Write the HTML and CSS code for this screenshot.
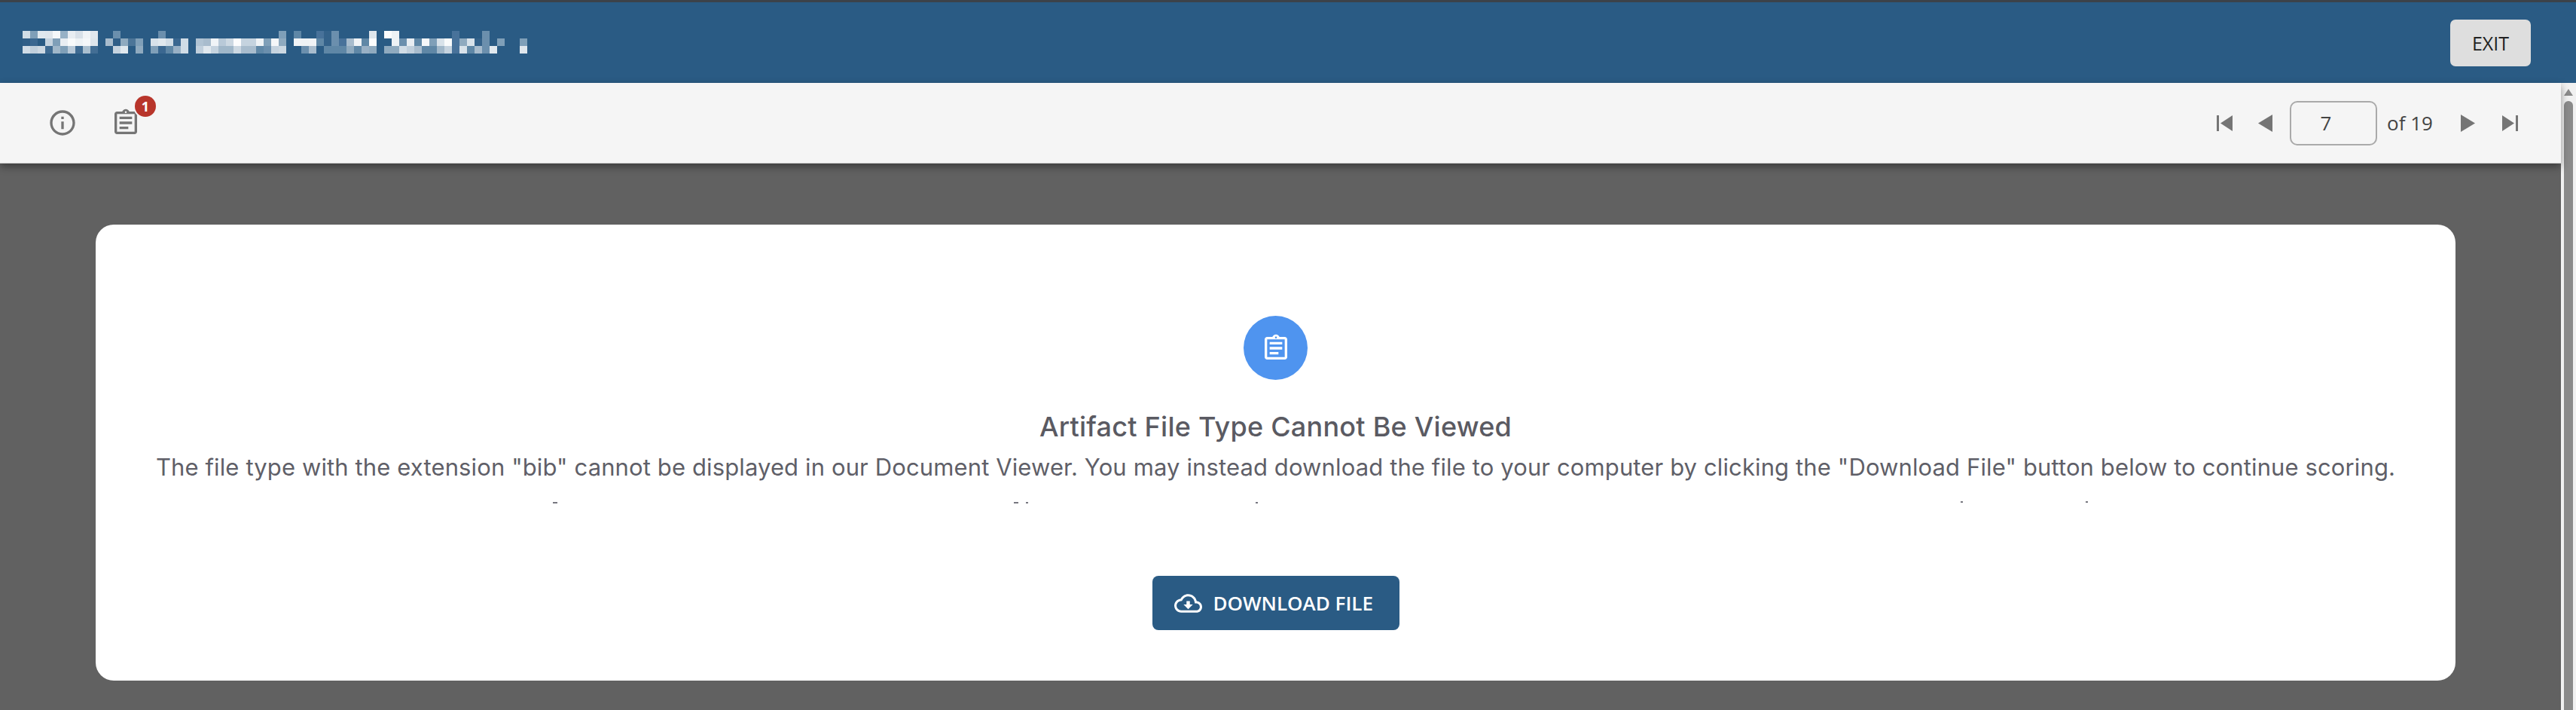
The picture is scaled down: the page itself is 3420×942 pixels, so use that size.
FILE: index.html
```html
<!DOCTYPE html>
<html lang="en">
<head>
    <meta charset="UTF-8">
    <meta name="viewport" content="width=device-width, initial-scale=1.0">
    <title>Document Viewer</title>
    <link rel="stylesheet" href="styles.css">
</head>
<body>
    <header class="topbar">
        <!-- title is pixelated in the source, so it is drawn as its mosaic -->
        <svg class="mosaic" viewBox="0 0 67 3" shape-rendering="crispEdges" role="img" aria-label="Pixelated document title">
            <g>
                <rect x="0" y="0" width="1" height="1" fill="#d0dde6"/><rect x="1" y="0" width="1" height="1" fill="#7f9fb8"/><rect x="2" y="0" width="1" height="1" fill="#e0e8ee"/><rect x="3" y="0" width="1" height="1" fill="#dfe6ec"/><rect x="4" y="0" width="1" height="1" fill="#f5f8fa"/><rect x="5" y="0" width="1" height="1" fill="#97b1c6"/><rect x="6" y="0" width="1" height="1" fill="#e8edf2"/><rect x="7" y="0" width="1" height="1" fill="#d8e0e8"/><rect x="8" y="0" width="1" height="1" fill="#f0f3f6"/><rect x="9" y="0" width="1" height="1" fill="#e2e8ee"/>
                <rect x="12" y="0" width="1" height="1" fill="#6b8fad"/><rect x="18" y="0" width="1" height="1" fill="#6b8fad"/>
                <rect x="34" y="0" width="1" height="1" fill="#7f9fb8"/><rect x="36" y="0" width="1" height="1" fill="#5f87a6"/><rect x="39" y="0" width="1" height="1" fill="#48729a"/><rect x="40" y="0" width="1" height="1" fill="#34628a"/><rect x="41" y="0" width="1" height="1" fill="#6b8fad"/><rect x="46" y="0" width="1" height="1" fill="#dfe6ec"/><rect x="48" y="0" width="1" height="1" fill="#fbfcfd"/><rect x="49" y="0" width="1" height="1" fill="#eef2f5"/><rect x="57" y="0" width="1" height="1" fill="#48729a"/><rect x="61" y="0" width="1" height="1" fill="#6b8fad"/>
            </g>
            <g>
                <rect x="0" y="1" width="1" height="1" fill="#2f5e87"/><rect x="1" y="1" width="1" height="1" fill="#3a6790"/><rect x="3" y="1" width="1" height="1" fill="#c5d3df"/><rect x="4" y="1" width="1" height="1" fill="#7f9fb8"/><rect x="5" y="1" width="1" height="1" fill="#e8edf2"/><rect x="6" y="1" width="1" height="1" fill="#f8fafb"/><rect x="7" y="1" width="1" height="1" fill="#eef2f5"/><rect x="8" y="1" width="1" height="1" fill="#f5f7f9"/><rect x="9" y="1" width="1" height="1" fill="#dfe6ec"/>
                <rect x="11" y="1" width="1" height="1" fill="#a8bccd"/><rect x="12" y="1" width="1" height="1" fill="#2f5e87"/><rect x="13" y="1" width="1" height="1" fill="#8faabf"/><rect x="14" y="1" width="1" height="1" fill="#4c7598"/><rect x="15" y="1" width="1" height="1" fill="#7f9fb8"/>
                <rect x="17" y="1" width="1" height="1" fill="#d8e2ea"/><rect x="18" y="1" width="1" height="1" fill="#e0e8ee"/><rect x="19" y="1" width="1" height="1" fill="#d0dce6"/><rect x="20" y="1" width="1" height="1" fill="#3a6790"/><rect x="21" y="1" width="1" height="1" fill="#d0dce6"/>
                <rect x="23" y="1" width="1" height="1" fill="#b0c3d3"/><rect x="24" y="1" width="1" height="1" fill="#a8bccd"/><rect x="25" y="1" width="1" height="1" fill="#f0f4f7"/><rect x="26" y="1" width="1" height="1" fill="#b8c9d8"/><rect x="27" y="1" width="1" height="1" fill="#ccd8e2"/><rect x="28" y="1" width="1" height="1" fill="#fbfcfd"/><rect x="29" y="1" width="1" height="1" fill="#c5d3df"/><rect x="30" y="1" width="1" height="1" fill="#c5d3df"/><rect x="31" y="1" width="1" height="1" fill="#eef2f5"/><rect x="32" y="1" width="1" height="1" fill="#7f9fb8"/><rect x="33" y="1" width="1" height="1" fill="#f5f7f9"/><rect x="34" y="1" width="1" height="1" fill="#8faabf"/>
                <rect x="36" y="1" width="1" height="1" fill="#f0f3f6"/><rect x="37" y="1" width="1" height="1" fill="#eef2f5"/><rect x="38" y="1" width="1" height="1" fill="#f0f3f6"/><rect x="39" y="1" width="1" height="1" fill="#5f87a6"/><rect x="40" y="1" width="1" height="1" fill="#34628a"/><rect x="41" y="1" width="1" height="1" fill="#6b8fad"/><rect x="42" y="1" width="1" height="1" fill="#48729a"/><rect x="43" y="1" width="1" height="1" fill="#a8bccd"/><rect x="44" y="1" width="1" height="1" fill="#f0f3f6"/><rect x="45" y="1" width="1" height="1" fill="#5f87a6"/><rect x="46" y="1" width="1" height="1" fill="#fbfcfd"/>
                <rect x="49" y="1" width="1" height="1" fill="#eef2f5"/><rect x="50" y="1" width="1" height="1" fill="#6b8fad"/><rect x="51" y="1" width="1" height="1" fill="#e8edf2"/><rect x="52" y="1" width="1" height="1" fill="#5f87a6"/><rect x="53" y="1" width="1" height="1" fill="#f5f7f9"/><rect x="54" y="1" width="1" height="1" fill="#7f9fb8"/><rect x="55" y="1" width="1" height="1" fill="#d8e2ea"/><rect x="56" y="1" width="1" height="1" fill="#f8fafb"/><rect x="57" y="1" width="1" height="1" fill="#48729a"/><rect x="58" y="1" width="1" height="1" fill="#8faabf"/><rect x="59" y="1" width="1" height="1" fill="#d8e2ea"/><rect x="60" y="1" width="1" height="1" fill="#34628a"/><rect x="61" y="1" width="1" height="1" fill="#6b8fad"/><rect x="63" y="1" width="1" height="1" fill="#7f9fb8"/><rect x="66" y="1" width="1" height="1" fill="#7f9fb8"/>
            </g>
            <g>
                <rect x="0" y="2" width="1" height="1" fill="#d0dce6"/><rect x="1" y="2" width="1" height="1" fill="#c0cfdc"/><rect x="2" y="2" width="1" height="1" fill="#ccd8e2"/><rect x="3" y="2" width="1" height="1" fill="#3f6b92"/><rect x="4" y="2" width="1" height="1" fill="#a0b7c9"/><rect x="5" y="2" width="1" height="1" fill="#7f9fb8"/><rect x="6" y="2" width="1" height="1" fill="#b8c9d8"/><rect x="7" y="2" width="1" height="1" fill="#3f6b92"/><rect x="8" y="2" width="1" height="1" fill="#aabfcf"/><rect x="9" y="2" width="1" height="1" fill="#436e94"/>
                <rect x="12" y="2" width="1" height="1" fill="#c5d3df"/><rect x="13" y="2" width="1" height="1" fill="#e0e8ee"/><rect x="15" y="2" width="1" height="1" fill="#8faabf"/>
                <rect x="17" y="2" width="1" height="1" fill="#7f9fb8"/><rect x="18" y="2" width="1" height="1" fill="#3a6790"/><rect x="19" y="2" width="1" height="1" fill="#5f87a6"/><rect x="20" y="2" width="1" height="1" fill="#98b0c5"/><rect x="21" y="2" width="1" height="1" fill="#d0dce6"/>
                <rect x="23" y="2" width="1" height="1" fill="#c0cfdc"/><rect x="24" y="2" width="1" height="1" fill="#e0e8ee"/><rect x="25" y="2" width="1" height="1" fill="#c5d3df"/><rect x="26" y="2" width="1" height="1" fill="#a0b7c9"/><rect x="27" y="2" width="1" height="1" fill="#a0b7c9"/><rect x="28" y="2" width="1" height="1" fill="#ccd8e2"/><rect x="29" y="2" width="1" height="1" fill="#a8bccd"/><rect x="30" y="2" width="1" height="1" fill="#a8bccd"/><rect x="31" y="2" width="1" height="1" fill="#5f87a6"/><rect x="32" y="2" width="1" height="1" fill="#6b8fad"/><rect x="33" y="2" width="1" height="1" fill="#c5d3df"/><rect x="34" y="2" width="1" height="1" fill="#ccd8e2"/>
                <rect x="37" y="2" width="1" height="1" fill="#6b8fad"/><rect x="38" y="2" width="1" height="1" fill="#a8bccd"/><rect x="40" y="2" width="1" height="1" fill="#5f87a6"/><rect x="41" y="2" width="1" height="1" fill="#5f87a6"/><rect x="42" y="2" width="1" height="1" fill="#5f87a6"/><rect x="43" y="2" width="1" height="1" fill="#8faabf"/><rect x="44" y="2" width="1" height="1" fill="#5f87a6"/><rect x="45" y="2" width="1" height="1" fill="#98b0c5"/><rect x="46" y="2" width="1" height="1" fill="#8faabf"/>
                <rect x="48" y="2" width="1" height="1" fill="#8faabf"/><rect x="49" y="2" width="1" height="1" fill="#8faabf"/><rect x="50" y="2" width="1" height="1" fill="#d0dce6"/><rect x="51" y="2" width="1" height="1" fill="#c0cfdc"/><rect x="52" y="2" width="1" height="1" fill="#a8bccd"/><rect x="53" y="2" width="1" height="1" fill="#5f87a6"/><rect x="54" y="2" width="1" height="1" fill="#5f87a6"/><rect x="55" y="2" width="1" height="1" fill="#a0b7c9"/><rect x="56" y="2" width="1" height="1" fill="#c5d3df"/><rect x="57" y="2" width="1" height="1" fill="#48729a"/><rect x="58" y="2" width="1" height="1" fill="#d8e2ea"/><rect x="59" y="2" width="1" height="1" fill="#5f87a6"/><rect x="60" y="2" width="1" height="1" fill="#a8bccd"/><rect x="61" y="2" width="1" height="1" fill="#6b8fad"/><rect x="62" y="2" width="1" height="1" fill="#e0e8ee"/><rect x="66" y="2" width="1" height="1" fill="#dfe6ec"/>
            </g>
        </svg>
        <button class="exit-btn">EXIT</button>
    </header>

    <div class="viewer">
        <div class="pane">
            <div class="toolbar">
                <div class="tools">
                    <svg class="tool-icon" viewBox="0 0 24 24"><path d="M11 7h2v2h-2zm0 4h2v6h-2zm1-9C6.48 2 2 6.48 2 12s4.48 10 10 10 10-4.48 10-10S17.52 2 12 2zm0 18c-4.41 0-8-3.59-8-8s3.59-8 8-8 8 3.59 8 8-3.59 8-8 8z"/></svg>
                    <div class="tool-badged">
                        <svg class="tool-icon" viewBox="0 0 24 24"><path d="M7 15h7v2H7zm0-4h10v2H7zm0-4h10v2H7zm12-4h-4.18C14.4 1.84 13.3 1 12 1s-2.4.84-2.82 2H5c-1.1 0-2 .9-2 2v14c0 1.1.9 2 2 2h14c1.1 0 2-.9 2-2V5c0-1.1-.9-2-2-2zm-7-.25c.41 0 .75.34.75.75s-.34.75-.75.75-.75-.34-.75-.75.34-.75.75-.75zM19 19H5V5h14v14z"/></svg>
                        <span class="badge">1</span>
                    </div>
                </div>
                <div class="pager">
                    <svg class="pager-end" viewBox="0 0 21 21"><path d="M0 0h3v21H0zM21 0v21L5 10.5z"/></svg>
                    <svg class="pager-step pager-prev" viewBox="0 0 19 23"><path d="M19 0v23L0 11.5z"/></svg>
                    <input class="page-input" type="text" value="7">
                    <span class="page-total">of 19</span>
                    <svg class="pager-step pager-next" viewBox="0 0 19 23"><path d="M0 0v23l19-11.5z"/></svg>
                    <svg class="pager-end pager-last" viewBox="0 0 21 21"><path d="M18 0h3v21h-3zM0 0v21l16-10.5z"/></svg>
                </div>
            </div>

            <main class="stage">
                <section class="card">
                    <div class="card-icon">
                        <svg viewBox="0 0 24 24"><path d="M7 15h7v2H7zm0-4h10v2H7zm0-4h10v2H7zm12-4h-4.18C14.4 1.84 13.3 1 12 1s-2.4.84-2.82 2H5c-1.1 0-2 .9-2 2v14c0 1.1.9 2 2 2h14c1.1 0 2-.9 2-2V5c0-1.1-.9-2-2-2zm-7-.25c.41 0 .75.34.75.75s-.34.75-.75.75-.75-.34-.75-.75.34-.75.75-.75zM19 19H5V5h14v14z"/></svg>
                    </div>
                    <h2 class="card-title">Artifact File Type Cannot Be Viewed</h2>
                    <p class="card-text">The file type with the extension "bib" cannot be displayed in our Document Viewer. You may instead download the file to your computer by clicking the "Download File" button below to continue scoring.</p>
                    <!-- tops of a second line that is cut off in the source -->
                    <svg class="cut-line" viewBox="0 0 2975 4" aria-hidden="true">
                        <rect x="528" y="1" width="6" height="2"/><rect x="1140" y="1" width="6" height="2"/><rect x="1156" y="1" width="3" height="2"/><rect x="1461" y="1" width="3" height="2"/><rect x="2397" y="0" width="3" height="2"/><rect x="2563" y="0" width="3" height="2"/>
                    </svg>
                    <button class="download-btn">
                        <svg viewBox="0 0 24 24"><path d="M19.35 10.04C18.67 6.59 15.64 4 12 4 9.11 4 6.6 5.64 5.35 8.04 2.34 8.36 0 10.91 0 14c0 3.31 2.69 6 6 6h13c2.76 0 5-2.24 5-5 0-2.64-2.05-4.78-4.65-4.96zM19 18H6c-2.21 0-4-1.79-4-4 0-2.05 1.53-3.76 3.56-3.97l1.07-.11.5-.95C8.08 7.14 9.94 6 12 6c2.62 0 4.88 1.86 5.39 4.43l.3 1.5 1.53.11c1.56.1 2.78 1.41 2.78 2.96 0 1.65-1.35 3-3 3zm-5.55-8h-2.9v3H8l4 4 4-4h-2.55z"/></svg>
                        DOWNLOAD FILE
                    </button>
                </section>
            </main>
        </div>

        <div class="scrollbar">
            <div class="scroll-up"></div>
            <div class="scroll-thumb"></div>
        </div>
    </div>
</body>
</html>
```

FILE: styles.css
```css
body {
    font-family: 'Open Sans', sans-serif;
    margin: 0;
    height: 942px;
    display: flex;
    flex-direction: column;
    overflow: hidden;
    background: #616161;
    color: #333;
}

.topbar {
    box-sizing: border-box;
    height: 110px;
    flex: none;
    display: flex;
    align-items: center;
    justify-content: space-between;
    padding: 0 60px 0 30px;
    background-color: #2a5b84;
    border-top: 3px solid #3c4249;
}

.mosaic {
    width: 670px;
    height: 30px;
    margin-top: -1px;
}

.exit-btn {
    width: 107px;
    height: 62px;
    padding: 0;
    background-color: #dedede;
    color: #222;
    border: none;
    border-radius: 7px;
    font-family: inherit;
    font-size: 25px;
}

.viewer {
    flex: 1;
    min-height: 0;
    display: flex;
}

.pane {
    flex: 1;
    min-width: 0;
    display: flex;
    flex-direction: column;
}

.toolbar {
    box-sizing: border-box;
    position: relative;
    height: 107px;
    flex: none;
    display: flex;
    align-items: center;
    justify-content: space-between;
    padding: 0 57px 0 63px;
    background-color: #f5f5f5;
    border-bottom: 1px solid #c8c8c8;
    box-shadow: 0 4px 10px rgba(0, 0, 0, 0.4);
}

.tools {
    display: flex;
    align-items: center;
    gap: 44px;
}

.tool-icon {
    display: block;
    width: 40px;
    height: 40px;
    fill: #757575;
}

.tool-badged {
    position: relative;
}

.badge {
    position: absolute;
    top: -16px;
    right: -20px;
    width: 28px;
    height: 28px;
    border-radius: 50%;
    background: #b8352b;
    box-shadow: 0 0 0 2px #f5f5f5;
    color: white;
    font-size: 18px;
    font-weight: bold;
    line-height: 28px;
    text-align: center;
}

.pager {
    display: flex;
    align-items: center;
    font-size: 26px;
    color: #444;
}

.pager svg {
    display: block;
    fill: #757575;
}

.pager-end {
    width: 21px;
    height: 21px;
}

.pager-step {
    width: 19px;
    height: 23px;
}

.pager-prev {
    margin-left: 34px;
}

.page-input {
    box-sizing: border-box;
    width: 116px;
    height: 59px;
    margin-left: 23px;
    padding: 0 20px 0 0;
    background: transparent;
    border: 2px solid #aaa;
    border-radius: 10px;
    color: #444;
    font-family: inherit;
    font-size: 26px;
    text-align: center;
}

.page-total {
    margin-left: 13px;
    width: 63px;
    white-space: nowrap;
}

.pager-next {
    margin-left: 35px;
}

.pager-last {
    margin-left: 36px;
}

.stage {
    flex: 1;
    padding: 81px 140px 0 127px;
    background: #616161;
}

.card {
    box-sizing: border-box;
    height: 605px;
    display: flex;
    flex-direction: column;
    align-items: center;
    padding-top: 121px;
    background: white;
    border-radius: 24px;
}

.card-icon {
    width: 85px;
    height: 85px;
    display: flex;
    align-items: center;
    justify-content: center;
    border-radius: 50%;
    background: #4f94ef;
}

.card-icon svg {
    width: 40px;
    height: 40px;
    fill: white;
}

.card-title {
    margin: 40px 0 0;
    font-family: 'Inter', sans-serif;
    font-size: 36px;
    font-weight: 500;
    letter-spacing: 0.25px;
    line-height: 44px;
    color: #5a5a62;
}

.card-text {
    margin: 10px 0 0;
    font-family: 'Inter', sans-serif;
    font-size: 31px;
    letter-spacing: 0.12px;
    line-height: 44px;
    color: #5f5f68;
    white-space: nowrap;
}

.cut-line {
    display: block;
    width: 2975px;
    height: 4px;
    margin-top: 23px;
    fill: #77777f;
}

.download-btn {
    box-sizing: border-box;
    width: 328px;
    height: 72px;
    margin-top: 95px;
    display: flex;
    align-items: center;
    gap: 15px;
    padding: 0 0 0 29px;
    background-color: #2a5b84;
    color: white;
    border: none;
    border-radius: 8px;
    font-family: inherit;
    font-size: 26px;
    font-weight: 600;
}

.download-btn svg {
    width: 37px;
    height: 37px;
    fill: white;
}

.scrollbar {
    width: 20px;
    flex: none;
    background: #f1f1f1;
    padding: 0 4px;
    box-sizing: border-box;
}

.scroll-up {
    width: 0;
    margin: 8px 0 0 0;
    border-left: 6px solid transparent;
    border-right: 6px solid transparent;
    border-bottom: 9px solid #8a8a8a;
}

.scroll-thumb {
    height: 820px;
    margin-top: 7px;
    background: #8a8a8a;
    border-radius: 6px;
}
```
